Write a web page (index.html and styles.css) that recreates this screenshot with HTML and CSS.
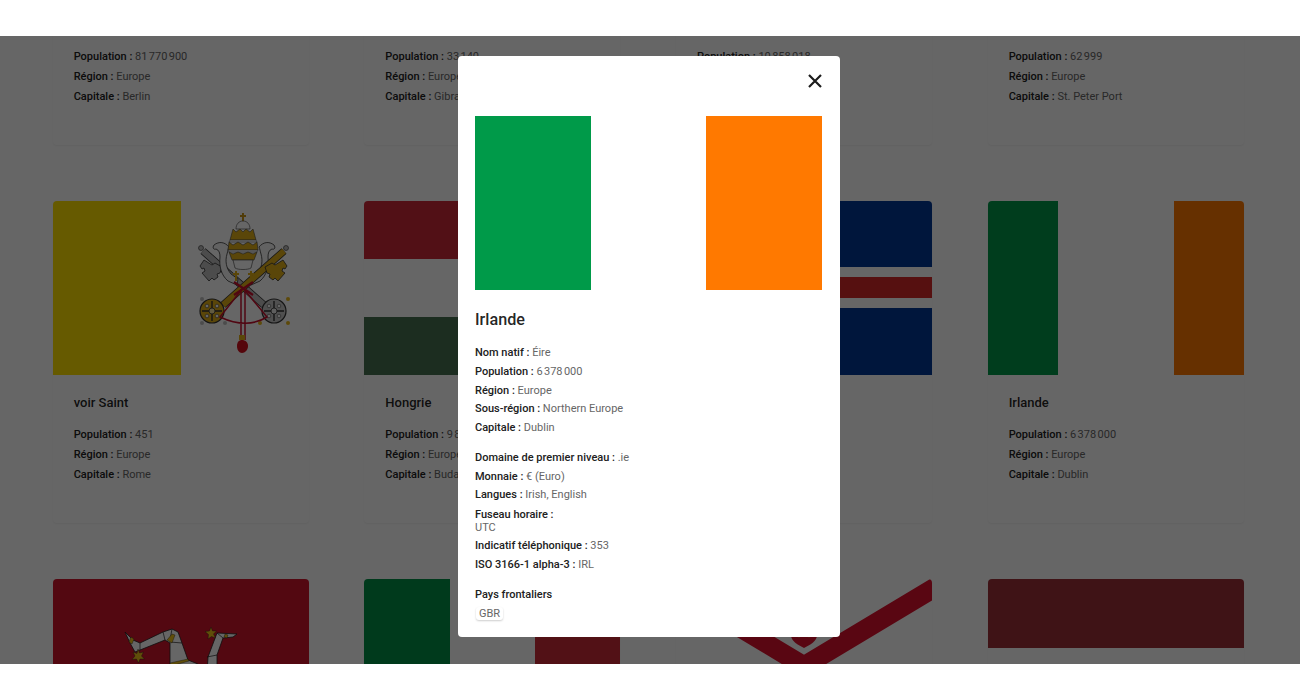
FILE: index.html
```html
<!DOCTYPE html>
<html lang="fr">
<head>
    <meta charset="UTF-8">
    <title>Pays</title>
    <link rel="stylesheet" href="styles.css">
</head>
<body>
    <div class="topbar"></div>
    <main class="stage">
        <div class="grid">
            <article class="card">
                <div class="flag"><div class="band" style="background:#000"></div><div class="band" style="background:#d00"></div><div class="band" style="background:#ffce00"></div></div>
                <div class="card-body">
                    <h3>Allemagne</h3>
                    <p><b>Population :</b> 81&#8239;770&#8239;900</p>
                    <p><b>Région :</b> Europe</p>
                    <p><b>Capitale :</b> Berlin</p>
                </div>
            </article>
            <article class="card">
                <div class="flag"></div>
                <div class="card-body">
                    <h3>Gibraltar</h3>
                    <p><b>Population :</b> 33&#8239;140</p>
                    <p><b>Région :</b> Europe</p>
                    <p><b>Capitale :</b> Gibraltar</p>
                </div>
            </article>
            <article class="card">
                <div class="flag"></div>
                <div class="card-body">
                    <h3>Grèce</h3>
                    <p><b>Population :</b> 10&#8239;858&#8239;018</p>
                    <p><b>Région :</b> Europe</p>
                    <p><b>Capitale :</b> Athènes</p>
                </div>
            </article>
            <article class="card">
                <div class="flag"></div>
                <div class="card-body">
                    <h3>Guernesey</h3>
                    <p><b>Population :</b> 62&#8239;999</p>
                    <p><b>Région :</b> Europe</p>
                    <p><b>Capitale :</b> St. Peter Port</p>
                </div>
            </article>

            <article class="card">
                <div class="flag">
                    <svg class="flag-art" viewBox="0 0 256 174">
                        <rect width="128" height="174" fill="#ffe000"/>
                        <rect x="128" width="128" height="174" fill="#fff"/>
                        <!-- silver key -->
                        <path d="M150 50 211 104" stroke="#333" stroke-width="7.5" fill="none"/>
                        <path d="M150 50 211 104" stroke="#bdbdbd" stroke-width="6" fill="none"/>
                        <path d="M151 59l-4 6 2 3 2-1 1 3-3 2 7 8 3-3 2 2 4-3-1-3 3-1 2-6-7-4-3 2z" fill="#bdbdbd" stroke="#333" stroke-width=".8"/>
                        <circle cx="148" cy="47" r="2.5" fill="#bdbdbd" stroke="#333" stroke-width=".6"/>
                        <circle cx="221" cy="110" r="12" fill="#c9c9c9" stroke="#333" stroke-width="1.2"/>
                        <path d="M221 100v20M211 110h20" stroke="#333" stroke-width="1.4"/>
                        <circle cx="221" cy="110" r="3" fill="#eee" stroke="#333" stroke-width=".8"/>
                        <circle cx="216" cy="105" r="1.8" fill="#fff" stroke="#333" stroke-width=".5"/>
                        <circle cx="226" cy="105" r="1.8" fill="#fff" stroke="#333" stroke-width=".5"/>
                        <circle cx="216" cy="115" r="1.8" fill="#fff" stroke="#333" stroke-width=".5"/>
                        <circle cx="226" cy="115" r="1.8" fill="#fff" stroke="#333" stroke-width=".5"/>
                        <circle cx="235" cy="98" r="2" fill="#e8b71a"/>
                        <circle cx="235" cy="122" r="2" fill="#e8b71a"/>
                        <circle cx="207" cy="122" r="2" fill="#e8b71a"/>
                        <!-- ribbons -->
                        <path d="M176 46c-4-5-10-6-15-2-2 3 0 5 2 4 3 1 4 4 4 8-1 9 1 18 8 24l9 4 1-6-7-5c-5-6-6-13-4-20 1-3 1-5 2-7zM206 46c4-5 10-6 15-2 2 3 0 5-2 4-3 1-4 4-4 8 1 9-1 18-8 24l-9 4-1-6 7-5c5-6 6-13 4-20-1-3-1-5-2-7z" fill="#f4f4f4" stroke="#333" stroke-width=".8"/>
                        <!-- gold key -->
                        <path d="M231 50 170 104" stroke="#333" stroke-width="7.5" fill="none"/>
                        <path d="M231 50 170 104" stroke="#e0ae17" stroke-width="6" fill="none"/>
                        <path d="M230 59l4 6-2 3-2-1-1 3 3 2-7 8-3-3-2 2-4-3 1-3-3-1-2-6 7-4 3 2z" fill="#e0ae17" stroke="#333" stroke-width=".8"/>
                        <circle cx="233" cy="47" r="2.5" fill="#bdbdbd" stroke="#333" stroke-width=".6"/>
                        <circle cx="159" cy="110" r="12" fill="#e0ae17" stroke="#333" stroke-width="1.2"/>
                        <path d="M159 100v20M149 110h20" stroke="#333" stroke-width="1.4"/>
                        <circle cx="159" cy="110" r="3" fill="#f4e3a0" stroke="#333" stroke-width=".8"/>
                        <circle cx="154" cy="105" r="1.8" fill="#fff" stroke="#333" stroke-width=".5"/>
                        <circle cx="164" cy="105" r="1.8" fill="#fff" stroke="#333" stroke-width=".5"/>
                        <circle cx="154" cy="115" r="1.8" fill="#fff" stroke="#333" stroke-width=".5"/>
                        <circle cx="164" cy="115" r="1.8" fill="#fff" stroke="#333" stroke-width=".5"/>
                        <circle cx="149" cy="98" r="2" fill="#bdbdbd"/>
                        <circle cx="149" cy="122" r="2" fill="#bdbdbd"/>
                        <circle cx="172" cy="122" r="2" fill="#bdbdbd"/>
                        <!-- tiara -->
                        <path d="M190 12v9M187 15h6" stroke="#c9961a" stroke-width="2"/>
                        <path d="M183 28c0-5 3-8 7-8s7 3 7 8z" fill="#fff" stroke="#555" stroke-width=".7"/>
                        <path d="M180 28l3 3 4-3 3 3 3-3 4 3 3-3 3 11h-26z" fill="#e0ae17" stroke="#444" stroke-width=".6"/>
                        <path d="M177 39h26l1 2h-28z" fill="#fff" stroke="#555" stroke-width=".5"/>
                        <path d="M176 41l4 3 5-3 5 3 5-3 5 3 4-3 1 8h-30z" fill="#e0ae17" stroke="#444" stroke-width=".6"/>
                        <path d="M175 49h30l-1 2h-28z" fill="#fff" stroke="#555" stroke-width=".5"/>
                        <path d="M176 51l4 2 5-2 5 2 5-2 5 2 4-2-3 8h-22z" fill="#e0ae17" stroke="#444" stroke-width=".6"/>
                        <path d="M180 59h20l-2 8c-3 2-13 2-16 0z" fill="#fff" stroke="#555" stroke-width=".7"/>
                        <!-- small crosses on the lappets -->
                        <path d="M183 70v10M180 73h6M198 70v10M195 73h6" stroke="#e0ae17" stroke-width="2"/>
                        <!-- cord -->
                        <path d="M181 81l19 13M200 81l-19 13" stroke="#c8102e" stroke-width="2.2" fill="none"/>
                        <path d="M190 87 167 116c15 7 31 10 47 0L190 87M188 88v51M192 88v51" fill="none" stroke="#c8102e" stroke-width="1.5"/>
                        <path d="M184 145c0-4 2-6 5-6s6 2 6 6-3 7-6 7-5-3-5-7z" fill="#d4111e"/>
                        <rect x="186" y="134" width="6" height="5" fill="#e0ae17"/>
                    </svg>
                </div>
                <div class="card-body">
                    <h3>voir Saint</h3>
                    <p><b>Population :</b> 451</p>
                    <p><b>Région :</b> Europe</p>
                    <p><b>Capitale :</b> Rome</p>
                </div>
            </article>
            <article class="card">
                <div class="flag flag-rows"><div class="band" style="background:#ce2939"></div><div class="band" style="background:#fff"></div><div class="band" style="background:#477050"></div></div>
                <div class="card-body">
                    <h3>Hongrie</h3>
                    <p><b>Population :</b> 9&#8239;823&#8239;000</p>
                    <p><b>Région :</b> Europe</p>
                    <p><b>Capitale :</b> Budapest</p>
                </div>
            </article>
            <article class="card">
                <div class="flag">
                    <svg class="flag-art" viewBox="0 0 256 174">
                        <rect width="256" height="174" fill="#003897"/>
                        <rect y="66" width="256" height="41" fill="#fff"/>
                        <rect y="76" width="256" height="21" fill="#d72828"/>
                    </svg>
                </div>
                <div class="card-body">
                    <h3>Islande</h3>
                    <p><b>Population :</b> 334&#8239;300</p>
                    <p><b>Région :</b> Europe</p>
                    <p><b>Capitale :</b> Reykjavik</p>
                </div>
            </article>
            <article class="card">
                <div class="flag"><div class="band-crop" style="background:#009a49"></div><div class="band-mid" style="background:#fff"></div><div class="band-crop" style="background:#ff7900"></div></div>
                <div class="card-body">
                    <h3>Irlande</h3>
                    <p><b>Population :</b> 6&#8239;378&#8239;000</p>
                    <p><b>Région :</b> Europe</p>
                    <p><b>Capitale :</b> Dublin</p>
                </div>
            </article>

            <article class="card">
                <div class="flag">
                    <svg class="flag-art" viewBox="0 0 256 174">
                        <rect width="256" height="174" fill="#cf142b"/>
                        <g fill="#fff" stroke="#222" stroke-width=".8">
                            <path d="M72 53 80 61 87 64 110 53 119 50 125 53 129 64 135 81 145 85 145 95 117 95 117 64 112 61 87 71 82 73 77 64z"/>
                            <path d="M184 55 164 54 155 78 154 95 164 95 164 76 170 59 180 58z"/>
                        </g>
                        <path d="M87 64v7M110 53l2 8M119 50l-2 11M129 64l-12-1M164 76l-10 2M170 59l-6-5" stroke="#222" stroke-width=".7" fill="none"/>
                        <path d="M78 58l3 2-2 5-3-2zM114 61l5-6 3 1-3 8zM117 84l18-4 1 2-18 5zM172 55l3 1-1 3-3-1z" fill="#f0c419" stroke="#222" stroke-width=".4"/>
                        <path d="M85 70l1.500 4 4-1-2 4 3 3-4.500 0-1.500 4-2-4-4.500 .5 3-3.500-2-4 4 1.500zM158 48l1.500 4 4 0-3 3 2 4-4-1.500-3.500 2.500 .5-4.500-3.500-3 4.500-.5z" fill="#f0c419" stroke="#222" stroke-width=".4"/>
                    </svg>
                </div>
                <div class="card-body">
                    <h3>Île de Man</h3>
                </div>
            </article>
            <article class="card">
                <div class="flag"><div class="band" style="background:#009246"></div><div class="band" style="background:#fff"></div><div class="band" style="background:#ce2b37"></div></div>
                <div class="card-body">
                    <h3>Italie</h3>
                </div>
            </article>
            <article class="card">
                <div class="flag">
                    <svg class="flag-art" viewBox="0 0 256 174">
                        <rect width="256" height="174" fill="#fff"/>
                        <path d="M-17 0 273 174M273 0-17 174" stroke="#df112d" stroke-width="19.4" fill="none"/>
                        <path d="M115 40h26v16c0 6-7 10-13 13-6-3-13-7-13-13z" fill="#df112d"/>
                        <path d="M120 55c2 3 4 3 6 0M130 55c2 3 4 3 6 0" stroke="#f0c419" stroke-width="2" fill="none"/>
                    </svg>
                </div>
                <div class="card-body">
                    <h3>Jersey</h3>
                </div>
            </article>
            <article class="card">
                <div class="flag flag-latvia"></div>
                <div class="card-body">
                    <h3>Lettonie</h3>
                </div>
            </article>
        </div>

        <div class="backdrop">
            <section class="modal">
                <div class="modal-top">
                    <svg class="close" viewBox="0 0 14 14"><path d="M1 1 13 13M13 1 1 13" stroke="#1c1c1c" stroke-width="2.2" fill="none"/></svg>
                </div>
                <div class="modal-flag"><div class="band" style="background:#009a49"></div><div class="band" style="background:#fff"></div><div class="band" style="background:#ff7900"></div></div>
                <h2>Irlande</h2>
                <div class="facts">
                    <p><b>Nom natif :</b> Éire</p>
                    <p><b>Population :</b> 6&#8239;378&#8239;000</p>
                    <p><b>Région :</b> Europe</p>
                    <p><b>Sous-région :</b> Northern Europe</p>
                    <p><b>Capitale :</b> Dublin</p>
                </div>
                <div class="facts">
                    <p><b>Domaine de premier niveau :</b> .ie</p>
                    <p><b>Monnaie :</b> € (Euro)</p>
                    <p><b>Langues :</b> Irish, English</p>
                    <p class="stacked"><b>Fuseau horaire :</b><span>UTC</span></p>
                    <p><b>Indicatif téléphonique :</b> 353</p>
                    <p><b>ISO 3166-1 alpha-3 :</b> IRL</p>
                </div>
                <h4>Pays frontaliers</h4>
                <span class="chip">GBR</span>
            </section>
        </div>
    </main>
    <div class="bottombar"></div>
</body>
</html>
```

FILE: styles.css
```css
* { box-sizing: border-box; }
html, body { margin: 0; height: 100%; overflow: hidden; }
body { font-family: Roboto, "Liberation Sans", sans-serif; background: #fff; display: flex; flex-direction: column; color: rgba(0, 0, 0, 0.87); }
.topbar, .bottombar { height: 36px; flex: none; background: #fff; }
.stage { flex: 1; position: relative; overflow: hidden; }

.grid { display: grid; grid-template-columns: repeat(4, 256px); column-gap: 55.67px; row-gap: 56px; padding: 0 52.67px; margin-top: -213px; }
.card { height: 322px; border-radius: 4px; overflow: hidden; background: #fff; box-shadow: 0 1px 2px rgba(0, 0, 0, 0.06); }
.flag { height: 174px; display: flex; }
.flag-rows { flex-direction: column; }
.flag-latvia { background: linear-gradient(#9e3039 0, #9e3039 69px, #fff 69px); }
.band { flex: 1; }
.band-crop { width: 70px; }
.band-mid { width: 116px; }
.flag-art { display: block; width: 256px; height: 174px; }
.card-body { padding: 19px 21px; }
.card-body h3 { margin: 0 0 14px; font-size: 13px; font-weight: 500; line-height: 17px; }
.card-body p { margin: 0; font-size: 11px; line-height: 20px; color: #666; }
b { font-weight: 500; color: #212121; }

.backdrop { position: absolute; inset: 0; background: rgba(0, 0, 0, 0.6); }
.modal { position: absolute; left: 458px; top: 20px; width: 382px; height: 581px; background: #fff; border-radius: 4px; padding: 0 18px 0 17px; }
.modal-top { height: 60px; display: flex; justify-content: flex-end; padding-top: 18px; }
.close { width: 14px; height: 14px; }
.modal-flag { height: 174px; display: flex; }
.modal h2 { margin: 19px 0 14px; font-size: 16.2px; font-weight: 500; line-height: 21px; }
.facts { margin-bottom: 11px; }
.facts p { margin: 0; font-size: 11px; line-height: 18.75px; color: #666; }
.facts .stacked { line-height: 13px; padding: 3px 0; }
.stacked b, .stacked span { display: block; }
.modal h4 { margin: 0 0 -2px; font-size: 11px; font-weight: 500; line-height: 18px; color: #212121; }
.chip { display: inline-block; margin-left: 1px; padding: 0 3px; font-size: 11px; line-height: 13px; color: #666; border-radius: 3px; box-shadow: 0 1px 2px rgba(0, 0, 0, 0.2); }
```
